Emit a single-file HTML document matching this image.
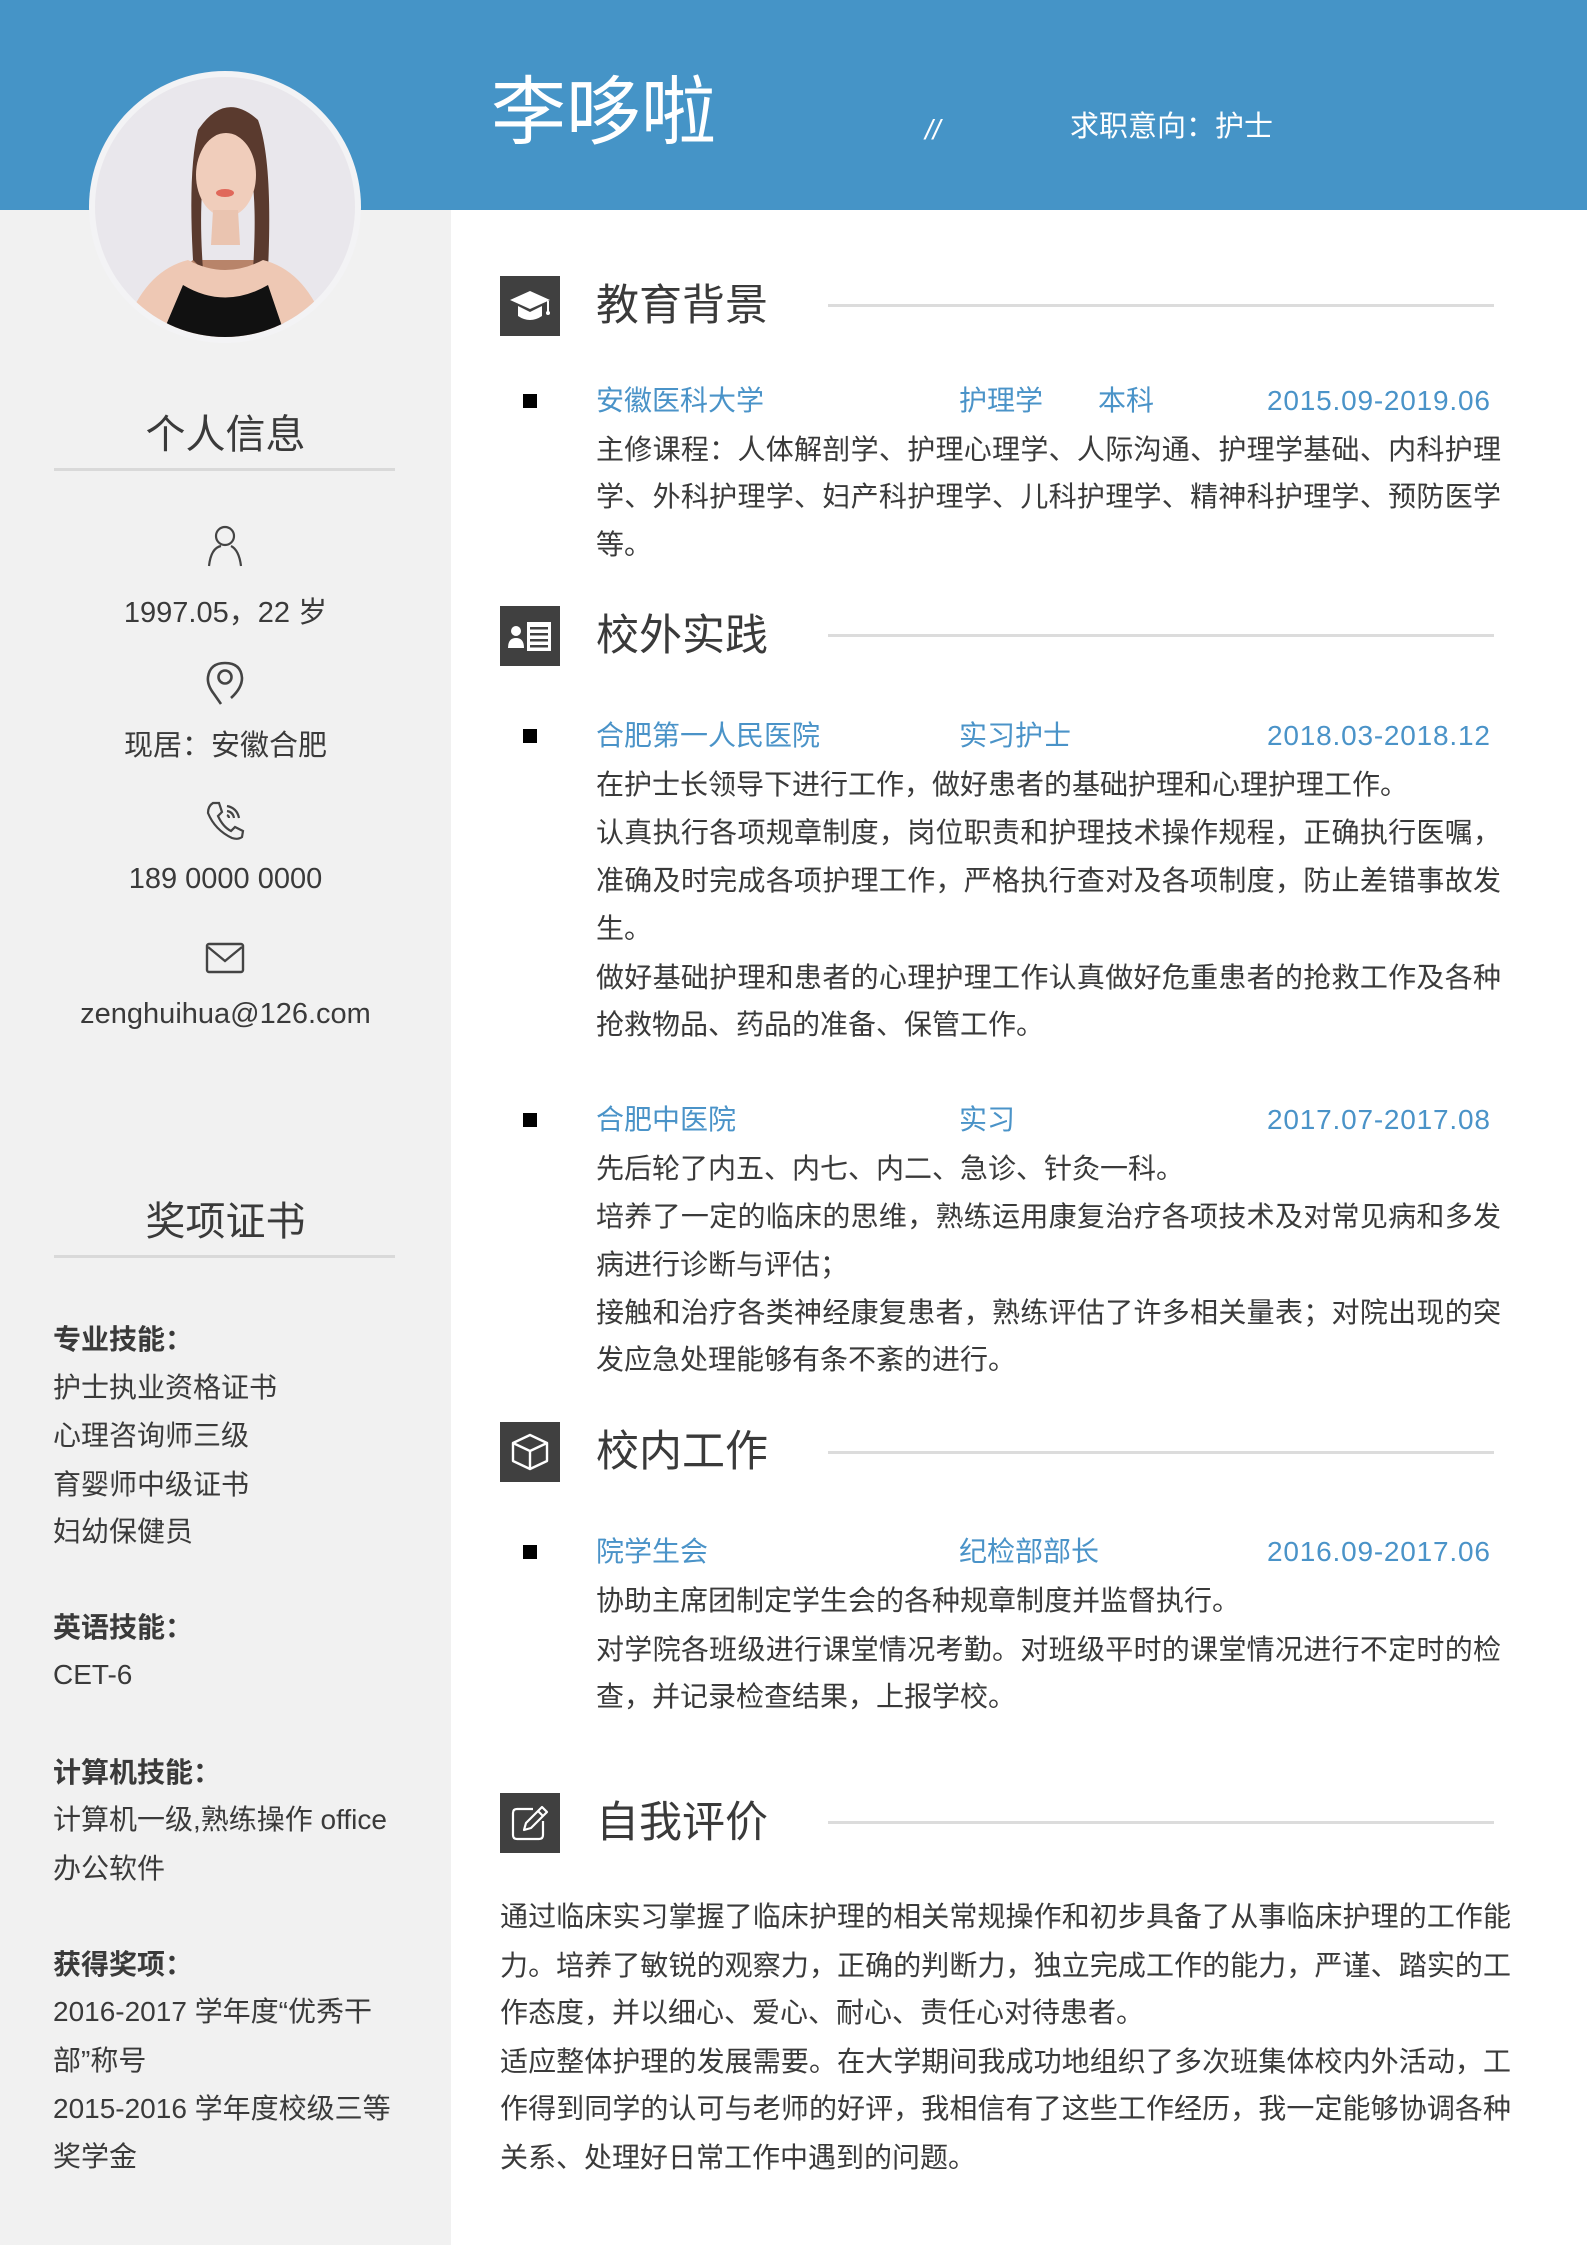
<!DOCTYPE html>
<html><head><meta charset="utf-8">
<style>
*{margin:0;padding:0;box-sizing:border-box}
body{width:1587px;height:2245px;position:relative;background:#fff;font-family:"Liberation Sans","Noto Sans CJK SC",sans-serif;color:#3a3a3a;overflow:hidden}
.a{position:absolute;white-space:nowrap}
.hdr{position:absolute;left:0;top:0;width:1587px;height:210px;background:#4594c7}
.side{position:absolute;left:0;top:210px;width:451px;height:2035px;background:#f1f1f1}
.c{position:absolute;left:0;width:451px;text-align:center;font-size:29px;line-height:40px}
.st{font-size:40px;line-height:50px;color:#3a3a3a}
.hl{position:absolute;left:54px;width:341px;height:3px;background:#d9d9d9}
.sl{position:absolute;left:53px;font-size:28px;line-height:40px}
.b{font-weight:bold}
.ib{position:absolute;left:500px;width:60px;height:60px;background:#404040}
.tt{position:absolute;left:596px;font-size:43px;line-height:60px;color:#3a3a3a}
.ln{position:absolute;left:828px;width:666px;height:3px;background:#dcdcdc}
.bu{position:absolute;left:523px;width:14px;height:14px;background:#000}
.bl{position:absolute;font-size:28px;line-height:40px;color:#4a93c8;white-space:nowrap}
.d{letter-spacing:0.8px}
.t{position:absolute;left:596px;font-size:28px;line-height:40px;white-space:nowrap}
.j{text-align:justify;text-align-last:justify;white-space:normal;width:905px}
.p{position:absolute;left:500px;font-size:28px;line-height:40px;white-space:nowrap}
.pj{text-align:justify;text-align-last:justify;white-space:normal;width:1011px}
</style></head><body>
<div class="hdr"></div>
<div class="side"></div>

<svg class="a" style="left:88px;top:70px" width="274" height="274" viewBox="0 0 274 274">
<defs><clipPath id="cp"><circle cx="137" cy="137" r="130"/></clipPath></defs>
<circle cx="137" cy="137" r="136" fill="#f3f3f5"/>
<g clip-path="url(#cp)">
<rect width="274" height="274" fill="#e9e7ec"/>
<path d="M80 270 Q90 200 105 190 L170 190 Q185 200 200 270 Z" fill="#b8846a"/>
<path d="M105 190 Q100 100 110 60 Q137 20 170 50 Q185 90 180 200 L165 200 Q170 120 160 90 L118 90 Q110 130 115 200 Z" fill="#5a3a2e"/>
<ellipse cx="138" cy="105" rx="30" ry="42" fill="#f0cdbb"/>
<path d="M125 140 L150 140 L152 175 L123 175 Z" fill="#eac4b0"/>
<path d="M40 250 Q60 200 100 190 Q137 210 175 190 Q215 200 235 250 L235 274 L40 274 Z" fill="#eec8b4"/>
<ellipse cx="137" cy="123" rx="9" ry="4" fill="#e0685a"/>
<path d="M95 215 Q137 240 180 215 L200 274 L70 274 Z" fill="#111"/>
</g>
</svg>

<div class="a" style="left:491px;top:62px;font-size:75px;line-height:100px;color:#fff">李哆啦</div>
<div class="a" style="left:925px;top:110px;font-size:28px;line-height:40px;color:#fff;font-style:italic">//</div>
<div class="a" style="left:1070px;top:107px;font-size:29px;line-height:40px;color:#fff">求职意向：护士</div>

<div class="c st" style="top:410px">个人信息</div>
<div class="hl" style="top:468px"></div>

<svg class="a" style="left:205px;top:524px" width="40" height="44" viewBox="0 0 40 44" fill="none" stroke="#444" stroke-width="2.2"><circle cx="20" cy="12" r="9"/><path d="M4 42 Q6 24 16 22 M36 42 Q34 26 26 22"/></svg>
<div class="c" style="top:593px">1997.05，22 岁</div>
<svg class="a" style="left:205px;top:660px" width="40" height="46" viewBox="0 0 40 46" fill="none" stroke="#444" stroke-width="2.6"><path d="M16 44 L9 34 Q2 25 3 17 Q5 3 20 3 Q36 3 37 18 Q37 28 26 38"/><circle cx="20" cy="17" r="6.5"/></svg>
<div class="c" style="top:726px">现居：安徽合肥</div>
<svg class="a" style="left:205px;top:800px" width="40" height="42" viewBox="0 0 40 42" fill="none" stroke="#444" stroke-width="2.2"><path d="M8 3 L14 3 L17 12 L13 16 Q18 27 26 31 L30 27 L38 31 L37 37 Q33 40 27 38 Q10 30 3 13 Q3 6 8 3 Z"/><path d="M22 6 Q32 8 34 18 M22 11 Q28 12 29 18 M22 15 Q24 16 24 18"/></svg>
<div class="c" style="top:859px">189 0000 0000</div>
<svg class="a" style="left:205px;top:941px" width="40" height="34" viewBox="0 0 40 34" fill="none" stroke="#444" stroke-width="2.4"><rect x="2" y="3" width="36" height="28" rx="2"/><path d="M3 6 L20 20 L37 6"/></svg>
<div class="c" style="top:994px">zenghuihua@126.com</div>

<div class="c st" style="top:1197px">奖项证书</div>
<div class="hl" style="top:1255px"></div>

<div class="sl b" style="top:1320px">专业技能：</div>
<div class="sl" style="top:1368px">护士执业资格证书</div>
<div class="sl" style="top:1416px">心理咨询师三级</div>
<div class="sl" style="top:1465px">育婴师中级证书</div>
<div class="sl" style="top:1512px">妇幼保健员</div>
<div class="sl b" style="top:1608px">英语技能：</div>
<div class="sl" style="top:1655px">CET-6</div>
<div class="sl b" style="top:1753px">计算机技能：</div>
<div class="sl" style="top:1800px">计算机一级,熟练操作 office</div>
<div class="sl" style="top:1849px">办公软件</div>
<div class="sl b" style="top:1945px">获得奖项：</div>
<div class="sl" style="top:1992px">2016-2017 学年度“优秀干</div>
<div class="sl" style="top:2041px">部”称号</div>
<div class="sl" style="top:2089px">2015-2016 学年度校级三等</div>
<div class="sl" style="top:2137px">奖学金</div>

<div class="ib" style="top:276px"><svg width="60" height="60" viewBox="0 0 60 60"><path d="M10 24 L30 15 L50 24 L30 33 Z" fill="#fff"/><path d="M18 30 L18 40 Q30 48 42 40 L42 30 L30 36 Z" fill="#fff"/><path d="M48 25 L48 36" stroke="#fff" stroke-width="2"/><circle cx="48" cy="37" r="2" fill="#fff"/></svg></div>
<div class="tt" style="top:276px">教育背景</div>
<div class="ln" style="top:304px"></div>
<div class="bu" style="top:394px"></div>
<div class="bl" style="left:596px;top:381px">安徽医科大学</div>
<div class="bl" style="left:959px;top:381px">护理学</div>
<div class="bl" style="left:1098px;top:381px">本科</div>
<div class="bl d" style="left:1267px;top:381px">2015.09-2019.06</div>
<div class="t j" style="top:430px">主修课程：人体解剖学、护理心理学、人际沟通、护理学基础、内科护理</div>
<div class="t j" style="top:477px">学、外科护理学、妇产科护理学、儿科护理学、精神科护理学、预防医学</div>
<div class="t" style="top:525px">等。</div>

<div class="ib" style="top:606px"><svg width="60" height="60" viewBox="0 0 60 60" fill="#fff"><circle cx="16" cy="25" r="5"/><path d="M8 42 Q8 32 16 32 Q24 32 24 42 Z"/><rect x="27" y="16" width="24" height="29"/><g fill="#404040"><rect x="30" y="21" width="18" height="2.5"/><rect x="30" y="27" width="18" height="2.5"/><rect x="30" y="33" width="18" height="2.5"/><rect x="30" y="39" width="18" height="2.5"/></g></svg></div>
<div class="tt" style="top:606px">校外实践</div>
<div class="ln" style="top:634px"></div>
<div class="bu" style="top:729px"></div>
<div class="bl" style="left:596px;top:716px">合肥第一人民医院</div>
<div class="bl" style="left:959px;top:716px">实习护士</div>
<div class="bl d" style="left:1267px;top:716px">2018.03-2018.12</div>
<div class="t" style="top:765px">在护士长领导下进行工作，做好患者的基础护理和心理护理工作。</div>
<div class="t j" style="top:813px">认真执行各项规章制度，岗位职责和护理技术操作规程，正确执行医嘱，</div>
<div class="t j" style="top:861px">准确及时完成各项护理工作，严格执行查对及各项制度，防止差错事故发</div>
<div class="t" style="top:909px">生。</div>
<div class="t j" style="top:958px">做好基础护理和患者的心理护理工作认真做好危重患者的抢救工作及各种</div>
<div class="t" style="top:1005px">抢救物品、药品的准备、保管工作。</div>

<div class="bu" style="top:1113px"></div>
<div class="bl" style="left:596px;top:1100px">合肥中医院</div>
<div class="bl" style="left:959px;top:1100px">实习</div>
<div class="bl d" style="left:1267px;top:1100px">2017.07-2017.08</div>
<div class="t" style="top:1149px">先后轮了内五、内七、内二、急诊、针灸一科。</div>
<div class="t j" style="top:1197px">培养了一定的临床的思维，熟练运用康复治疗各项技术及对常见病和多发</div>
<div class="t" style="top:1245px">病进行诊断与评估；</div>
<div class="t j" style="top:1293px">接触和治疗各类神经康复患者，熟练评估了许多相关量表；对院出现的突</div>
<div class="t" style="top:1340px">发应急处理能够有条不紊的进行。</div>

<div class="ib" style="top:1422px"><svg width="60" height="60" viewBox="0 0 60 60" fill="none" stroke="#fff" stroke-width="2.4" stroke-linejoin="round"><path d="M30 13 L47 21 L47 39 L30 47 L13 39 L13 21 Z"/><path d="M13 21 L30 29 L47 21 M30 29 L30 47"/></svg></div>
<div class="tt" style="top:1422px">校内工作</div>
<div class="ln" style="top:1451px"></div>
<div class="bu" style="top:1545px"></div>
<div class="bl" style="left:596px;top:1532px">院学生会</div>
<div class="bl" style="left:959px;top:1532px">纪检部部长</div>
<div class="bl d" style="left:1267px;top:1532px">2016.09-2017.06</div>
<div class="t" style="top:1581px">协助主席团制定学生会的各种规章制度并监督执行。</div>
<div class="t j" style="top:1630px">对学院各班级进行课堂情况考勤。对班级平时的课堂情况进行不定时的检</div>
<div class="t" style="top:1677px">查，并记录检查结果，上报学校。</div>

<div class="ib" style="top:1793px"><svg width="60" height="60" viewBox="0 0 60 60" fill="none" stroke="#fff" stroke-width="2.2" stroke-linejoin="round"><path d="M33 16 L17 16 Q13 16 13 20 L13 42 Q13 46 17 46 L39 46 Q43 46 43 42 L43 28"/><path d="M24 37 L26 30 L42 14 L47 19 L31 35 Z M38 18 L43 23"/></svg></div>
<div class="tt" style="top:1793px">自我评价</div>
<div class="ln" style="top:1821px"></div>
<div class="p pj" style="top:1897px">通过临床实习掌握了临床护理的相关常规操作和初步具备了从事临床护理的工作能</div>
<div class="p pj" style="top:1946px">力。培养了敏锐的观察力，正确的判断力，独立完成工作的能力，严谨、踏实的工</div>
<div class="p" style="top:1993px">作态度，并以细心、爱心、耐心、责任心对待患者。</div>
<div class="p pj" style="top:2042px">适应整体护理的发展需要。在大学期间我成功地组织了多次班集体校内外活动，工</div>
<div class="p pj" style="top:2089px">作得到同学的认可与老师的好评，我相信有了这些工作经历，我一定能够协调各种</div>
<div class="p" style="top:2138px">关系、处理好日常工作中遇到的问题。</div>
</body></html>
